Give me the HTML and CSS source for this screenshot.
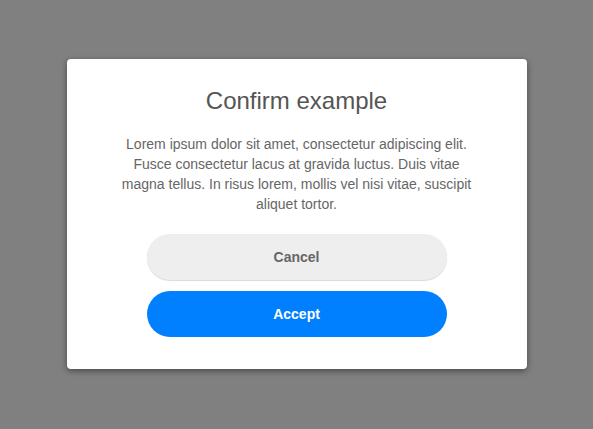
FILE: index.html
```html
<!DOCTYPE html>
<html>
<head>
<meta charset="utf-8">
<link rel="stylesheet" href="styles.css">
</head>
<body>
<div class="overlay">
  <div class="modal">
    <h1 class="title">Confirm example</h1>
    <p class="message">Lorem ipsum dolor sit amet, consectetur adipiscing elit. Fusce consectetur lacus at gravida luctus. Duis vitae magna tellus. In risus lorem, mollis vel nisi vitae, suscipit aliquet tortor.</p>
    <div class="actions">
      <button class="btn btn-cancel">Cancel</button>
      <button class="btn btn-accept">Accept</button>
    </div>
  </div>
</div>
</body>
</html>
```
FILE: styles.css
```css
html, body {
  margin: 0;
  padding: 0;
  height: 100%;
}
body {
  background: #808080;
  font-family: "Liberation Sans", Arial, sans-serif;
}
.overlay {
  height: 100%;
  display: flex;
  align-items: center;
  justify-content: center;
}
.modal {
  width: 460px;
  box-sizing: border-box;
  background: #fff;
  border-radius: 4px;
  box-shadow: 0 2px 6px rgba(0, 0, 0, 0.45);
  padding: 28px 40px 32px;
  display: flex;
  flex-direction: column;
  align-items: center;
  margin-top: -2px;
}
.title {
  margin: 0;
  font-size: 24px;
  line-height: 28px;
  font-weight: normal;
  color: #555;
}
.message {
  margin: 19px 0 0;
  width: 360px;
  font-size: 14px;
  line-height: 20px;
  color: #666;
  text-align: center;
}
.actions {
  margin-top: 20px;
  display: flex;
  flex-direction: column;
  gap: 11px;
  width: 300px;
}
.btn {
  height: 46px;
  border: none;
  border-radius: 23px;
  font-family: "Liberation Sans", Arial, sans-serif;
  font-size: 14px;
  font-weight: bold;
  padding: 0;
}
.btn-cancel {
  background: #eeeeee;
  color: #666;
  box-shadow: 0 1px 1px rgba(0, 0, 0, 0.15);
}
.btn-accept {
  background: #007fff;
  color: #fff;
}
```
